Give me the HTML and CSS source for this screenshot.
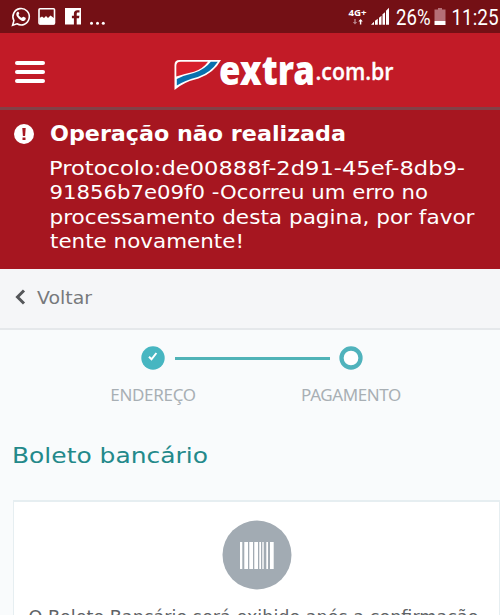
FILE: index.html
```html
<!DOCTYPE html>
<html lang="pt-BR">
<head>
<meta charset="utf-8">
<meta name="viewport" content="width=device-width">
<title>Extra.com.br – Pagamento</title>
<link rel="stylesheet" href="styles.css">
</head>
<body>
<div class="status">
  <svg class="status-icons" width="110" height="33" viewBox="0 0 110 33">
    <path d="M12.6 25.200l1.300-4.600a8.200 8.200 0 1 1 3.100 3.200z" fill="none" stroke="#fff" stroke-width="1.600"/>
    <path d="M17.600 11.800c-2.500 1.700-1 5 1.500 7.100 2.600 2.200 5 3 6.400.6.5-.9.3-1.500-.4-1.900l-1.600-.8c-.8-.4-1.300 1.200-2 1-1.300-.5-2.600-1.700-3-2.700-.2-.6 1.100-1 .7-1.800l-.7-1.500z" fill="#fff"/>
    <rect x="39" y="8.700" width="15.500" height="15.300" rx="1" fill="none" stroke="#fff" stroke-width="1.600"/>
    <path d="M39.500 18l2.500-1.500 2 1.500 2-2 2 2 2.500-2.500 4 3v6h-15z" fill="#fff"/>
    <path d="M65 8h16v16.600h-4.300v-6.300H79l.4-2.600h-2.700v-1.800c0-1 .5-1.300 1.500-1.300h1.300v-2.300h-2.100c-2.400 0-3.500 1.300-3.500 3.400v2h-2v2.600h2v6.300H65z" fill="#fff"/>
    <circle cx="91.500" cy="23.200" r="1.500" fill="#fff"/><circle cx="97.500" cy="23.200" r="1.500" fill="#fff"/><circle cx="103.300" cy="23.200" r="1.500" fill="#fff"/>
  </svg>
  <svg class="status-info" width="155" height="33" viewBox="345 0 155 33">
    <text class="network" x="348.500" y="16" textLength="18" lengthAdjust="spacingAndGlyphs">4G+</text>
    <path d="M354.300 19v3h-1.500l2.200 2.500 2.200-2.500h-1.500v-3z" fill="#b6838a"/>
    <path d="M359.900 24.500v-3h-1.500l2.200-2.500 2.200 2.500h-1.500v3z" fill="#fff"/>
    <path d="M371 24.700h3v-3zM375 24.700h2.800v-6l-2.800 2zM379 24.700h2.500v-9l-2.500 2zM382.500 24.700h2.500v-12.500l-2.500 2zM386 24.700h3v-17l-3 3z" fill="#fff"/>
    <text class="clock" x="396" y="24.500" textLength="34.500" lengthAdjust="spacingAndGlyphs">26%</text>
    <path d="M438 8h4v1.500h3.500v11.500h-11v-11.500h3.500z" fill="#b56f77"/>
    <path d="M434.500 21h11v4h-11z" fill="#fff"/>
    <text class="clock" x="451.500" y="24.500" textLength="47" lengthAdjust="spacingAndGlyphs">11:25</text>
  </svg>
</div>
<header class="header">
  <div class="menu"><i></i><i></i><i></i></div>
  <svg class="logo" width="224" height="44" viewBox="172 52 224 44">
    <path d="M174.500 90V65q0-5 5-5h41.500q-7 13-22.500 18.500-15 3.500-24 11.500z" fill="#fff"/>
    <path d="M176.300 76.500V66q0-4.300 4.300-4.300h27.400q-5 7-14 10-9 2-17.700 4.800z" fill="#d71f2c"/>
    <path d="M176.800 79q8-4 17-6 11-3.500 17-11.300h7q-7 10.800-20 15.300-13 3.500-21 8.500z" fill="#0871ae"/>
    <text class="brand" x="219" y="84.500" textLength="96" lengthAdjust="spacingAndGlyphs">extra</text>
    <text class="domain" x="315.500" y="79.500" textLength="78" lengthAdjust="spacingAndGlyphs">.com.br</text>
  </svg>
</header>
<section class="alert">
  <svg class="alert-icon" width="20" height="20" viewBox="0 0 20 20"><circle cx="10" cy="10" r="10" fill="#fff"/><path d="M8.300 4h3.400l-.6 8H8.900zM8.500 13.500h3V16h-3z" fill="#a61620"/></svg>
  <svg class="message" width="440" height="136" viewBox="50 120 440 136">
    <text class="alert-title" x="50" y="141" textLength="296" lengthAdjust="spacingAndGlyphs">Operação não realizada</text>
    <g class="alert-text">
      <text x="49" y="175" textLength="416" lengthAdjust="spacingAndGlyphs">Protocolo:de00888f-2d91-45ef-8db9-</text>
      <text x="49.500" y="199" textLength="378.500" lengthAdjust="spacingAndGlyphs">91856b7e09f0 -Ocorreu um erro no</text>
      <text x="49.500" y="223.500" textLength="425" lengthAdjust="spacingAndGlyphs">processamento desta pagina, por favor</text>
      <text x="50" y="248" textLength="194" lengthAdjust="spacingAndGlyphs">tente novamente!</text>
    </g>
  </svg>
</section>
<nav class="back">
  <svg width="11" height="16" viewBox="0 0 11 16"><path d="M9 1.500L2.500 8 9 14.500" fill="none" stroke="#55575a" stroke-width="3"/></svg>
  <svg width="60" height="26" viewBox="0 0 60 26"><text class="back-label" x="0" y="20" textLength="55" lengthAdjust="spacingAndGlyphs">Voltar</text></svg>
</nav>
<main class="content">
  <div class="steps">
    <div class="step">
      <svg width="24" height="24" viewBox="0 0 24 24"><circle cx="12" cy="12" r="11.700" fill="#47b6c1"/><path d="M8 10.800l2.500 2.500L15.400 7" fill="none" stroke="#fff" stroke-width="2"/></svg>
      <span>ENDEREÇO</span>
    </div>
    <div class="track"></div>
    <div class="step">
      <svg width="24" height="24" viewBox="0 0 24 24"><circle cx="12" cy="12" r="9.500" fill="#fff" stroke="#50b3bc" stroke-width="4.300"/></svg>
      <span class="step-current">PAGAMENTO</span>
    </div>
  </div>
  <svg class="title" width="220" height="32" viewBox="13 440 220 32"><text x="12" y="463" textLength="196" lengthAdjust="spacingAndGlyphs">Boleto bancário</text></svg>
  <div class="card">
    <svg width="70" height="70" viewBox="0 0 70 70"><circle cx="35" cy="35" r="34.500" fill="#a2abb3"/><path d="M18 22h2.300v27H18zM22.300 22h3.700v27h-3.700zM27.300 22h3.700v27h-3.700zM32.300 22h3.700v27h-3.700zM37.300 22h1.700v27h-1.700zM40.300 22h1.400v27h-1.400zM44.300 22h1.700v27h-1.700zM48 22h3.700v27h-3.700z" fill="#fff"/></svg>
    <svg class="description" width="460" height="30" viewBox="27 600 460 30"><text x="27.500" y="622.500" textLength="450" lengthAdjust="spacingAndGlyphs">O Boleto Bancário será exibido após a confirmação</text></svg>
  </div>
</main>
</body>
</html>
```
FILE: styles.css
```css
* { box-sizing: border-box; }
body { margin: 0; width: 500px; height: 615px; overflow: hidden; background: #f9fbfc; font-family: "DejaVu Sans", sans-serif; }
svg { display: block; flex: none; overflow: visible; }
.status { display: flex; justify-content: space-between; height: 33px; background: #741015; }
.network { font: bold 9px "Noto Sans", sans-serif; fill: #fff; }
.clock { font: 22px Roboto, sans-serif; fill: #fff; }
.header { display: flex; height: 74px; padding: 19px 15px 0; background: #c21b27; }
.menu { display: flex; flex-direction: column; gap: 5px; width: 30px; margin: 9px 127px 0 0; }
.menu i { height: 4px; border-radius: 2px; background: #fff; }
.brand { font: 900 41px "Noto Sans", sans-serif; fill: #fff; }
.domain { font: 600 23px "Open Sans", sans-serif; fill: #fff; stroke: #fff; stroke-width: .3px; }
.alert { display: flex; gap: 16px; height: 162px; padding: 14px 10px 0 14px; border-top: 3px solid #824047; background: #a61620; }
.message { margin-top: -4px; }
.alert-title { font-size: 21.500px; font-weight: 700; fill: #fff; }
.alert-text { font-size: 19px; fill: #fff; }
.back { display: flex; align-items: center; gap: 11px; height: 61px; padding: 0 0 4px 15px; border-bottom: 2px solid #e5e8eb; background: #f5f6f8; }
.back-label { font-size: 17px; fill: #77797c; }
.content { padding: 16px 0 0 13px; }
.steps { display: flex; justify-content: center; align-items: flex-start; padding-right: 9px; }
.step { display: flex; flex-direction: column; align-items: center; gap: 15px; width: 24px; color: #a8afb4; font: 17px/20px "Noto Sans", sans-serif; }
.step span { white-space: nowrap; letter-spacing: -.4px; }
.step span:not(.step-current) { letter-spacing: -.3px; }
.track { width: 155px; height: 3px; margin: 11px 9.500px 0; background: #50b3b7; }
.title { margin-top: 35px; font-size: 22px; fill: #23898a; }
.card { display: flex; flex-direction: column; align-items: flex-start; width: 487px; height: 140px; margin-top: 28px; padding: 18px 0 0 14px; border: 1px solid #e6eef1; border-top-width: 2px; background: #fff; }
.card > svg:first-child { margin-left: 194px; }
.description { margin-top: 10px; font-size: 17.500px; fill: #606366; }
```
